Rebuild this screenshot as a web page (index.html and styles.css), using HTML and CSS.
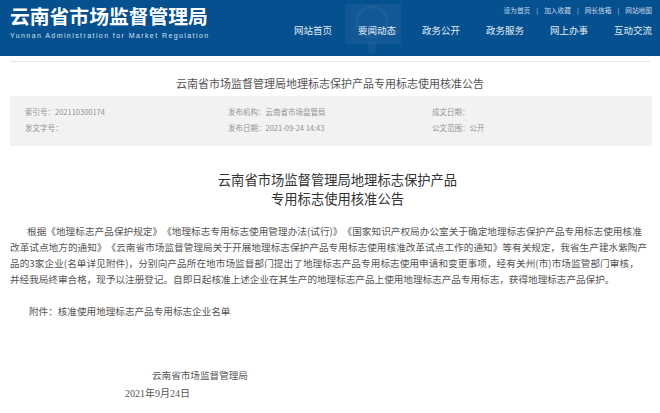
FILE: index.html
```html
<!DOCTYPE HTML>
<html lang="zh-CN">
<head>
	<meta charset="UTF-8" />
	<title>云南省市场监督管理局</title>
	<link rel="stylesheet" href="styles.css">
</head>
<body>
	<div class="header">
		<svg class="emblem" width="56" height="56" viewBox="0 0 56 56">
			<rect x="0" y="4" width="56" height="40" fill="#fff" opacity="0.05" />
			<circle cx="27" cy="22" r="15" fill="none" stroke="#fff" stroke-width="3" opacity="0.05" />
			<path d="M22 42h10l-2 12h-6z" fill="#fff" opacity="0.05" />
		</svg>
		<div class="logo">
			<div class="logoName">云南省市场监督管理局</div>
			<div class="logoEn">Yunnan Administration for Market Regulation</div>
		</div>
		<div class="headerRight">
			<div class="topLinks">
				<span>设为首页</span><i>|</i><span>加入收藏</span><i>|</i><span>网长信箱</span><i>|</i><span>网站地图</span>
			</div>
			<div class="nav">
				<span>网站首页</span>
				<span>要闻动态</span>
				<span>政务公开</span>
				<span>政务服务</span>
				<span>网上办事</span>
				<span>互动交流</span>
			</div>
		</div>
	</div>

	<div class="crumbTitle">云南省市场监督管理局地理标志保护产品专用标志使用核准公告</div>

	<div class="meta">
		<div class="metaCol metaCol1">
			<p>索引号：202110300174</p>
			<p>发文字号：</p>
		</div>
		<div class="metaCol metaCol2">
			<p>发布机构：云南省市场监管局</p>
			<p>发布日期：2021-09-24 14:43</p>
		</div>
		<div class="metaCol metaCol3">
			<p>成文日期：</p>
			<p>公文范围：公开</p>
		</div>
	</div>

	<h1 class="docTitle">云南省市场监督管理局地理标志保护产品<br>专用标志使用核准公告</h1>

	<div class="docBody">
		<p class="line wide indent">根据《地理标志产品保护规定》《地理标志专用标志使用管理办法(试行)》《国家知识产权局办公室关于确定地理标志保护产品专用标志使用核准</p>
		<p class="line wide">改革试点地方的通知》《云南省市场监督管理局关于开展地理标志保护产品专用标志使用核准改革试点工作的通知》等有关规定，我省生产建水紫陶产</p>
		<p class="line wider">品的3家企业(名单详见附件)，分别向产品所在地市场监督部门提出了地理标志产品专用标志使用申请和变更事项，经有关州(市)市场监管部门审核，</p>
		<p class="line">并经我局终审合格，现予以注册登记。自即日起核准上述企业在其生产的地理标志产品上使用地理标志产品专用标志，获得地理标志产品保护。</p>
		<p class="line attach">附件：核准使用地理标志产品专用标志企业名单</p>
		<p class="sign">云南省市场监督管理局</p>
		<p class="date">2021年9月24日</p>
	</div>
</body>
</html>
```

FILE: styles.css
```css
* {
	box-sizing: border-box;
}
body {
	margin: 0;
	height: 413px;
	overflow: hidden;
	background: #fff;
	font-family: "Noto Sans CJK SC", "Liberation Sans", sans-serif;
	color: #555;
	text-spacing-trim: space-all;
}
p {
	margin: 0;
}

.header {
	position: relative;
	display: flex;
	justify-content: space-between;
	height: 56px;
	padding: 0 8px 0 10px;
	background: #05508f;
	color: #fff;
}
.emblem {
	position: absolute;
	left: 345px;
	top: 0;
}
.logo {
	padding-top: 3px;
}
.logoName {
	font-size: 19.8px;
	line-height: 25px;
	font-weight: 700;
	white-space: nowrap;
}
.logoEn {
	margin-top: 3px;
	font-family: "Liberation Sans", sans-serif;
	font-size: 7px;
	line-height: 9px;
	letter-spacing: 1.42px;
	white-space: nowrap;
	color: #d5e2ee;
}
.headerRight {
	display: flex;
	flex-direction: column;
	align-items: flex-end;
}
.topLinks {
	margin-top: 5px;
	font-size: 6.7px;
	line-height: 10px;
	color: #c9d9e8;
	white-space: nowrap;
}
.topLinks i {
	margin: 0 6px;
	font-style: normal;
}
.nav {
	display: flex;
	gap: 26px;
	margin-top: 9px;
	font-size: 9.5px;
	line-height: 12px;
	white-space: nowrap;
	color: #e4edf5;
}

.crumbTitle {
	margin: 5px 10px 0;
	padding-top: 13px;
	height: 35px;
	border-top: 1px solid #e6e6e6;
	text-align: center;
	font-size: 11px;
	line-height: 16px;
	white-space: nowrap;
}

.meta {
	display: flex;
	height: 50px;
	margin: 0 8px 0 10px;
	padding: 8px 0 0 15px;
	background: #f2f2f2;
	font-size: 7.5px;
	line-height: 16px;
	color: #929292;
	white-space: nowrap;
}
.metaCol1 {
	width: 203px;
}
.metaCol2 {
	width: 204px;
}

.docTitle {
	margin: 24px 0 0;
	padding-left: 15px;
	text-align: center;
	font-size: 13.3px;
	line-height: 19px;
	font-weight: 400;
	color: #333;
}

.docBody {
	margin-top: 15px;
	padding-left: 10px;
	font-size: 9.6px;
	line-height: 16px;
	white-space: nowrap;
}
.wide {
	letter-spacing: 0.06px;
}
.wider {
	letter-spacing: 0.09px;
}
.indent {
	padding-left: 17px;
}
.attach {
	margin-top: 16px;
	padding-left: 19px;
}
.sign {
	margin-top: 47px;
	padding-left: 142px;
	line-height: 18px;
}
.date {
	padding-left: 115px;
	font-family: "Liberation Serif", "Noto Sans CJK SC", serif;
	font-size: 10px;
	line-height: 19px;
}
```
